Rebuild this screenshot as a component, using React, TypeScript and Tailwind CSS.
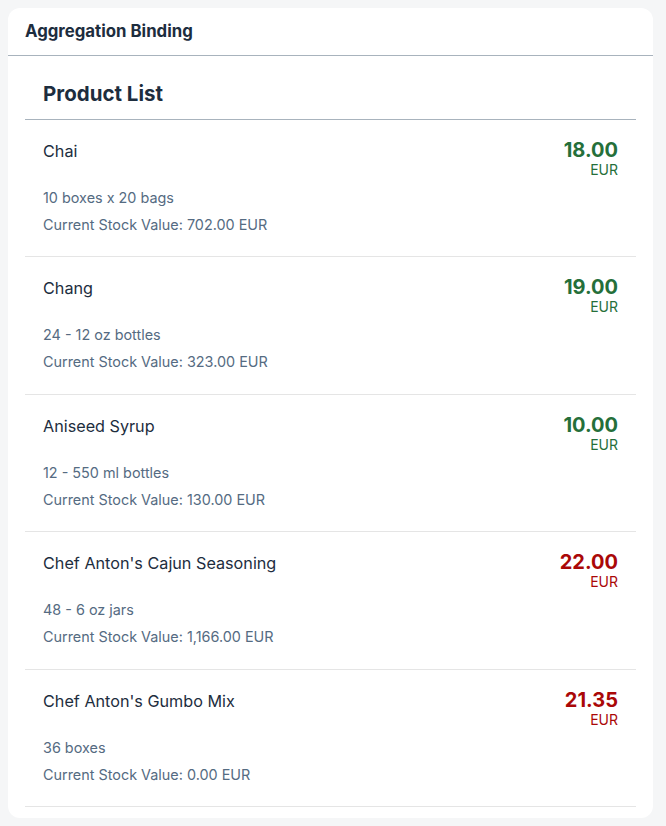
type Product = {
  name: string;
  unit: string;
  stock: string;
  price: string;
  ok: boolean;
};

const products: Product[] = [
  { name: "Chai", unit: "10 boxes x 20 bags", stock: "702.00", price: "18.00", ok: true },
  { name: "Chang", unit: "24 - 12 oz bottles", stock: "323.00", price: "19.00", ok: true },
  { name: "Aniseed Syrup", unit: "12 - 550 ml bottles", stock: "130.00", price: "10.00", ok: true },
  { name: "Chef Anton's Cajun Seasoning", unit: "48 - 6 oz jars", stock: "1,166.00", price: "22.00", ok: false },
  { name: "Chef Anton's Gumbo Mix", unit: "36 boxes", stock: "0.00", price: "21.35", ok: false },
];

function ProductItem({ p }: { p: Product }) {
  const tone = p.ok ? "text-[#256f3a]" : "text-[#aa0808]";
  return (
    <li className="flex justify-between border-b border-[#e5e5e5] px-[18px] pt-[18px] pb-[21.4px]">
      <div className="flex flex-col">
        <div className="mt-[3px] text-[16.2px] leading-[20px] text-[#1d2d3e]">{p.name}</div>
        <div className="mt-[27px] text-[14.4px] leading-[20px] text-[#556b82]">{p.unit}</div>
        <div className="mt-[7px] text-[14.4px] leading-[20px] text-[#556b82]">
          Current Stock Value: {p.stock} EUR
        </div>
      </div>
      <div className={"flex flex-col items-end " + tone}>
        <div className="text-[20px] font-bold leading-[24px]">{p.price}</div>
        <div className="text-[14px] leading-[16px]">EUR</div>
      </div>
    </li>
  );
}

export default function App() {
  return (
    <div className="min-h-[826px] bg-[#f5f6f7] pt-2 pl-2" style={{ fontFamily: 'Inter, "Liberation Sans", Arial, sans-serif' }}>
      <div className="flex h-[810px] w-[645px] flex-col rounded-xl bg-white">
        <div className="flex h-[48px] items-center border-b border-[#a8b3bd] px-[17px]">
          <h1 className="text-[16.8px] font-bold text-[#1d2d3e]">Aggregation Binding</h1>
        </div>
        <div className="px-[17px]">
          <div className="border-b border-[#a8b3bd] px-[18px] pt-[24px] pb-[11px]">
            <h2 className="text-[20.5px] font-bold leading-[28px] text-[#1d2d3e]">Product List</h2>
          </div>
          <ul>
            {products.map((p) => (
              <ProductItem key={p.name} p={p} />
            ))}
          </ul>
        </div>
      </div>
    </div>
  );
}
